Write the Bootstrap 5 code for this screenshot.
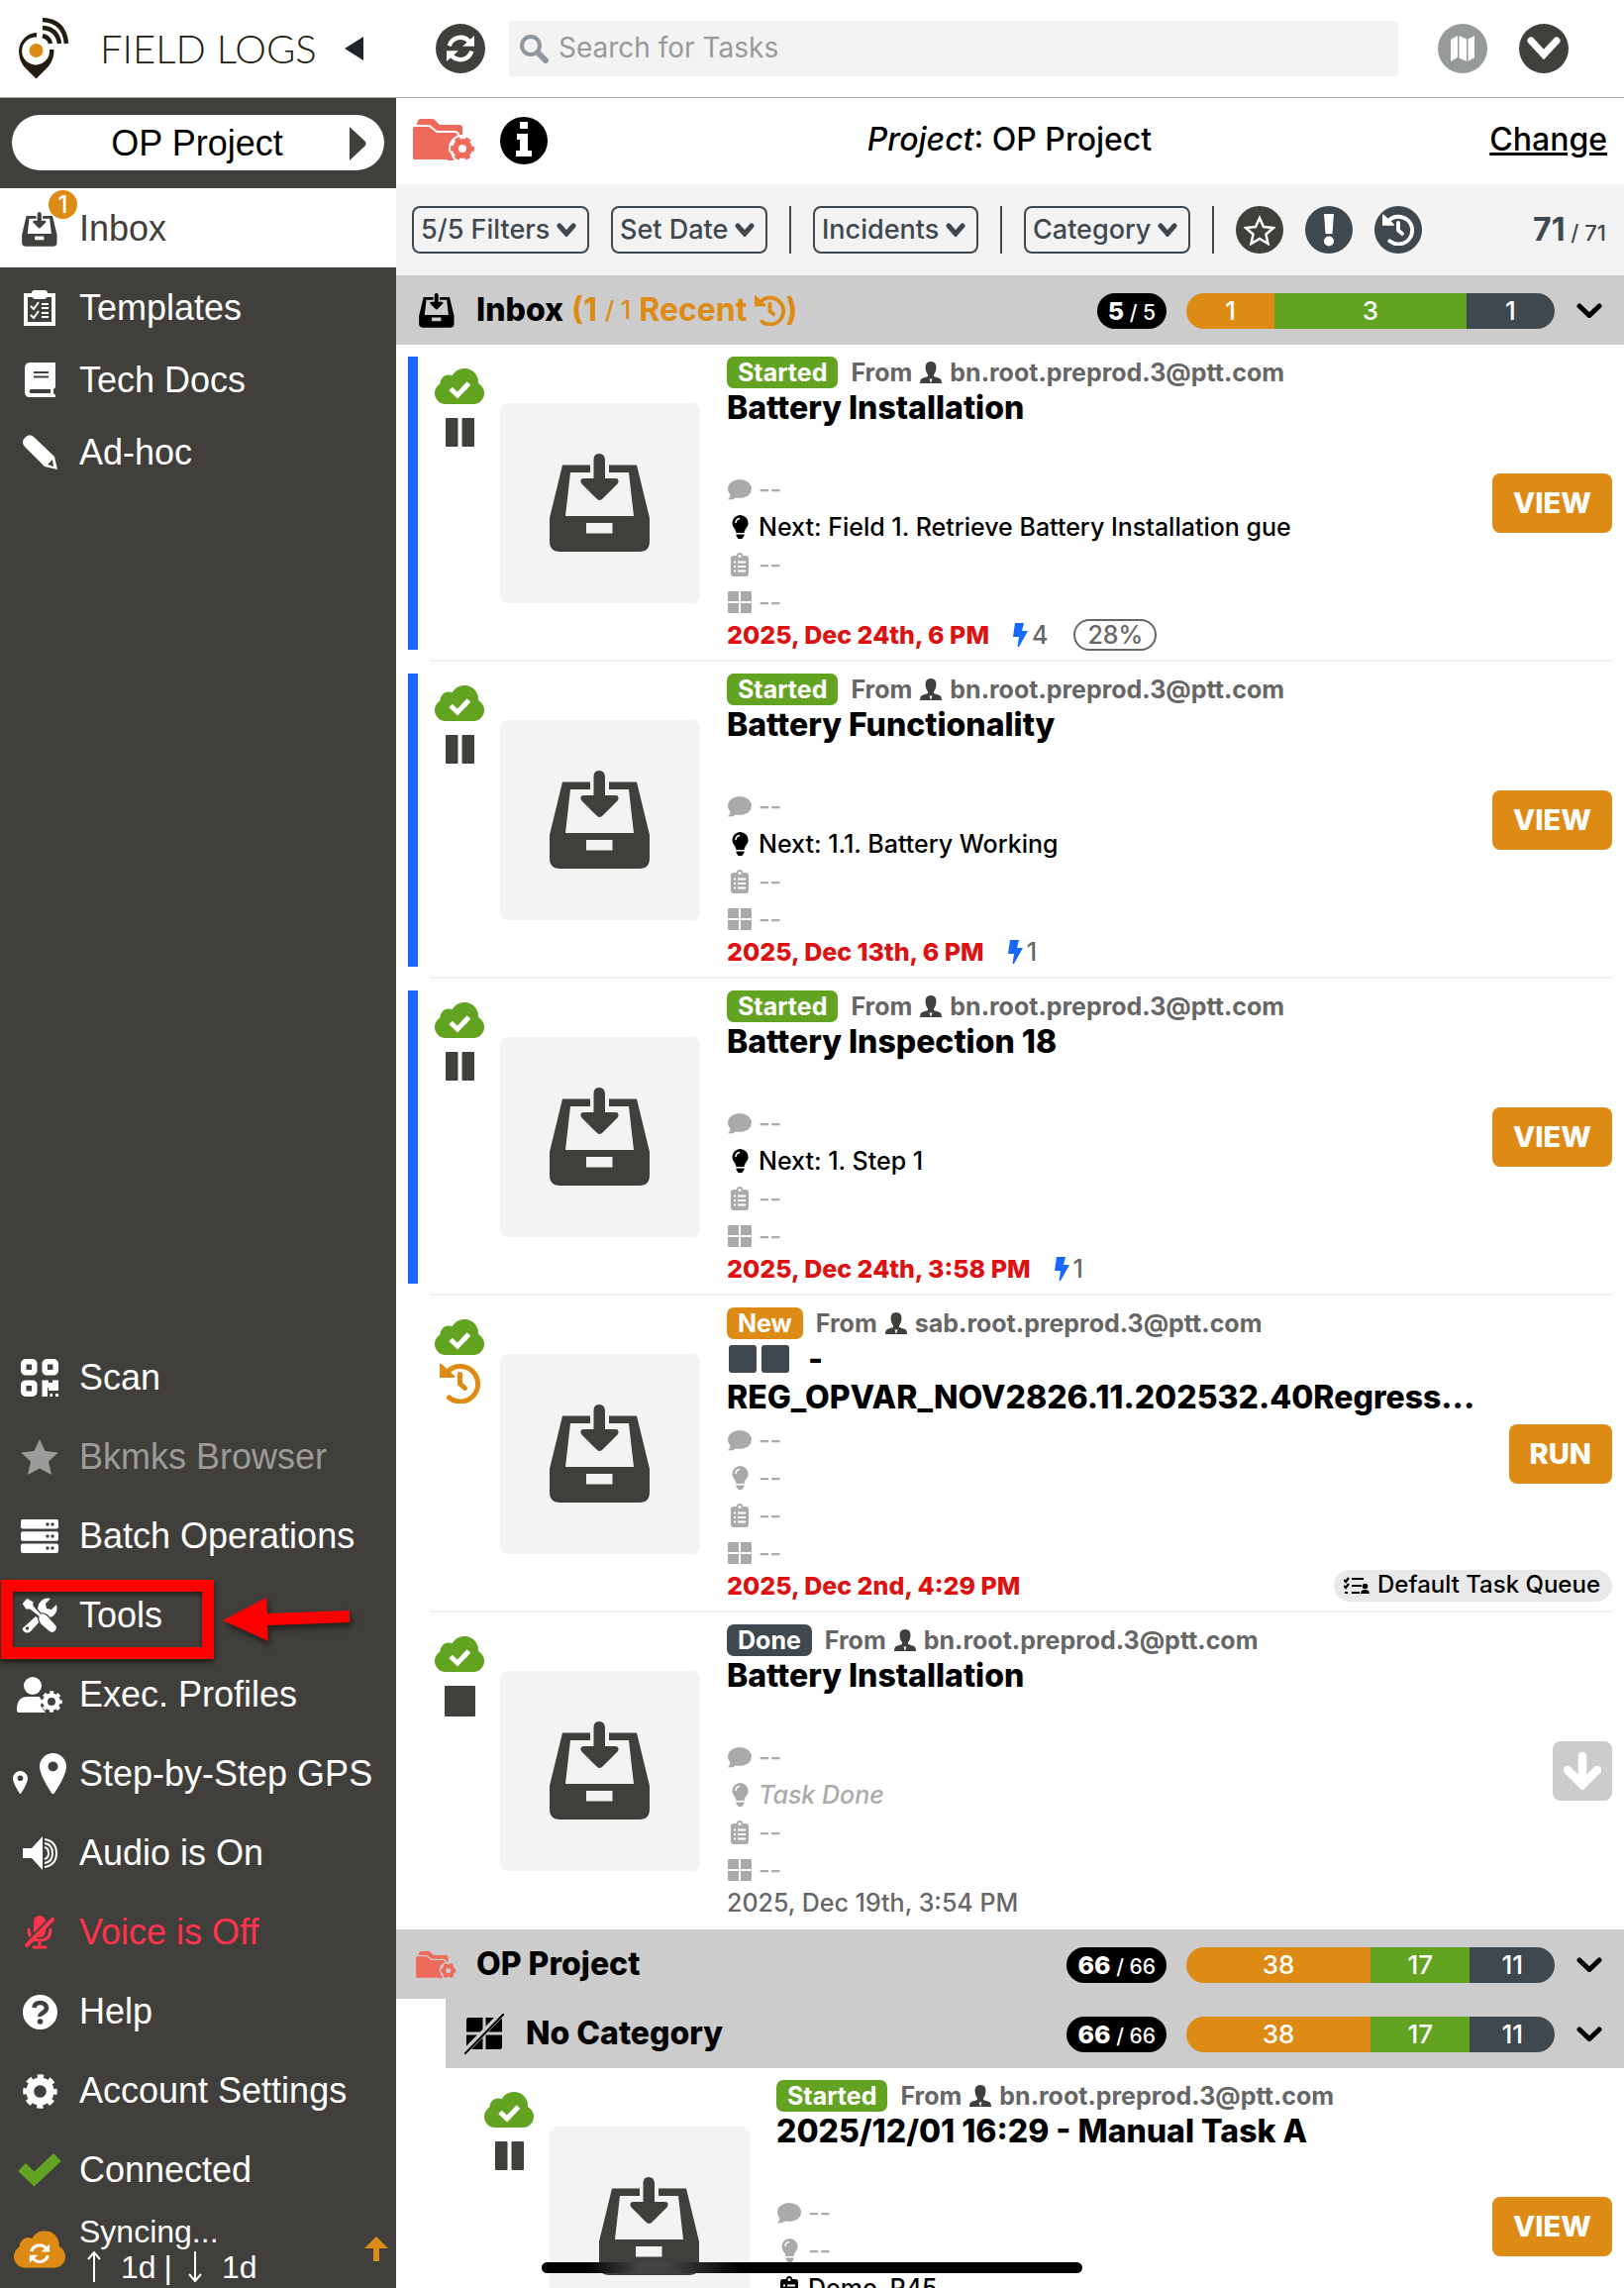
<!DOCTYPE html>
<html lang="en">
<head>
<meta charset="utf-8">
<meta name="viewport" content="width=device-width, initial-scale=1">
<title>Field Logs - Inbox</title>
<link href="https://cdn.jsdelivr.net/npm/bootstrap@5.3.0/dist/css/bootstrap.min.css" rel="stylesheet">
<style>
:root{--dark:#403f3b;--slate:#40484f;--orange:#dd8b14;--green:#62a322;--bar:#cccccc;--pale:#f3f3f3}
body{font-family:Inter,"Liberation Sans",sans-serif;font-optical-sizing:none;color:#000;background:#fff;line-height:1.2}
svg{display:block;flex:none;fill:currentColor}
button{font:inherit}
.top-bar{height:99px;border-bottom:1px solid #aaa}
.side{width:400px;flex:none}
.side,.side a,.side button{font-family:"Liberation Sans",Arial,sans-serif;font-size:36px}
.brand-zone{width:400px;padding-left:18px;color:#231c10}
.brand-name{font-family:Lato,sans-serif;font-weight:300;font-size:40px;line-height:48px;margin-left:31px;white-space:nowrap}
.side-panel{background:var(--dark);color:#fff}
.project-pick{height:56px;margin:17px 12px 18px;border:0;border-radius:28px;background:#fff;color:#000;padding:2px 18px 0 34px}
.side-link{display:flex;align-items:center;height:80px;color:#fff;text-decoration:none;position:relative;white-space:nowrap}
.side-top .side-link{height:73px}
.side-top .side-link.current{height:80px;margin-bottom:4px;padding-top:2px;background:#fff;color:var(--dark)}
.side-ico{width:80px;flex:none;display:flex;justify-content:center}
.count-dot{position:absolute;left:49px;top:2px;width:29px;height:29px;border-radius:50%;background:var(--orange);color:#fff;font:500 24px/29px Inter,sans-serif;text-align:center}
.faded{color:#9c9b99 !important}
.voice{color:#ff334b !important}
.sync-row{height:79px}
.sync-text{font-size:32px;line-height:36px}
.focus-box{position:absolute;left:1px;top:4px;width:215px;height:80px;border:12px solid #f00;box-shadow:0 3px 5px rgba(0,0,0,.6), inset 0 3px 4px rgba(0,0,0,.5);pointer-events:none}
.focus-arrow{position:absolute;left:224px;top:20px;color:#f00;filter:drop-shadow(2px 4px 3px rgba(0,0,0,.5))}
.round-btn{width:50px;height:50px;border:0;border-radius:50%;background:var(--dark);color:#fff;display:flex;align-items:center;justify-content:center;padding:0;flex:none}
.round-btn.ash{background:#969a9b}
.round-sm{width:48px;height:48px}
.slate{background:var(--slate)}
.search-box{height:56px;background:var(--pale);border-radius:3px;padding-left:11px}
.search-box input{border:0;background:none;font-size:28px;color:#333;outline:0;padding:0 0 0 10px;min-width:0}
.search-box input::placeholder{color:#999;opacity:1}
.project-row{height:87px;padding:0 17px 2px 16px;font-size:32px;font-weight:500}
.filters{height:92px;background:var(--pale);padding:0 18px 0 16px;color:var(--slate)}
.pick{width:auto;height:48px;border:2px solid var(--slate);border-radius:8px;color:var(--slate);font-size:27px;font-weight:500;line-height:32px;padding:0 37px 0 7px;background:var(--pale) url("data:image/svg+xml,%3Csvg xmlns='http://www.w3.org/2000/svg' viewBox='0 0 20 14'%3E%3Cpath d='M3 3l7 8 7-8' fill='none' stroke='%2340484f' stroke-width='5' stroke-linecap='round'/%3E%3C/svg%3E") no-repeat right 11px top 15px/20px 14px}
.split-line{width:2px;height:48px;background:var(--slate);margin:0 22px}
.gap-l{margin-left:22px}
.shown{font-size:32px;font-weight:700}
.shown small{font-size:22px;font-weight:500}
.group-bar{height:70px;background:var(--bar);padding:1px 22px 0 23px;font-size:32px;font-weight:800;--gap:#ccc}
.group-ico{width:58px;flex:none}
.group-ico.wide{margin-left:-4px;width:62px}
.warm{color:var(--orange);font-weight:700}
.light-num{font-weight:500;font-size:25px}
.total{height:36px;border-radius:18px;background:#000;color:#fff;padding:0 11px;font-size:25px;line-height:36px;white-space:nowrap}
.total small{font-size:21px;font-weight:500}
.meter{width:372px;height:36px;border-radius:18px;background:none;font-size:26px;font-weight:500;margin:0 22px 0 20px}
.meter .progress-bar{color:#fff}
.o{background:var(--orange)}.g{background:var(--green)}.s{background:var(--slate)}
.task{height:320px;padding:12px 12px 0;position:relative}
.task:not(:last-child)::after{content:"";position:absolute;left:34px;right:12px;bottom:0;height:2px;background:#f1f1f1}
.stripe{width:10px;height:296px;flex:none}
.stripe.on{background:#1668ff}
.status-col{width:50px;margin-left:17px;flex:none;padding-top:12px;gap:14px}
.status-col .bigger{margin-top:-6px}
.thumb{width:202px;height:202px;margin:47px 27px 0 16px;border-radius:8px;background:var(--pale);color:var(--dark);flex:none;display:flex;align-items:center;justify-content:center}
.info-grid{display:grid;grid-template-columns:minmax(0,1fr) auto;grid-template-rows:264px 32px;flex:1;min-width:0;height:296px;font-size:25px}
.act{grid-column:2;grid-row:1/3;align-self:center;z-index:1}
.when{grid-column:1/3;grid-row:2;padding-top:1px}
.tag{height:32px;line-height:33px;border-radius:7px;color:#fff;font-weight:700;padding:0 11px;margin-right:13px}
.from{color:#666;font-weight:700;white-space:nowrap}
.task-name{font-size:32px;line-height:39px;height:78px;font-weight:800;margin:0 0 5px}
.block-mark{display:inline-block;width:28px;height:28px;border-radius:3px;background:var(--slate);vertical-align:-3px;margin:0 5px 0 0}
.block-mark:first-child{margin-left:2px}
.fact{height:38px;color:#aaa;font-weight:500;white-space:nowrap}
.fact.live{color:#000}
.fact-ico{width:26px;display:flex;justify-content:center;margin-right:6px}
.late{color:#dd1111;font-weight:800}
.muted-txt{color:#666;font-weight:500}
.pct{height:32px;border:2px solid #666;border-radius:16px;line-height:28px;padding:0 12px;margin-left:26px}
.queue{height:32px;border-radius:16px;background:#e9e9e9;padding:0 12px 0 10px;font-size:24px;font-weight:500}
.go{background:var(--orange);border:0;border-radius:8px;color:#fff;font-size:29px;font-weight:800;height:60px;padding:1px 21px 0}
.go-off{background:#ccc;width:60px;padding:0 11px}
.nested{margin-left:50px}
.feed{overflow-y:auto;scrollbar-width:none}
.home-line{position:fixed;left:50%;bottom:15px;width:33.3%;height:11px;border-radius:6px;transform:translateX(-50%);background:linear-gradient(90deg,#000 8%,#444 18%,#444 23%,#000 37%);z-index:5}
</style>
<script src="https://cdn.jsdelivr.net/npm/bootstrap@5.3.0/dist/js/bootstrap.bundle.min.js"></script>
</head>
<body>
<svg width="0" height="0" class="position-absolute" aria-hidden="true">
<symbol id="i-inbox" viewBox="0 0 102 100"><path fill-rule="evenodd" d="M13 11.500H41V19H21L16 63H85L80 19H60V11.500H88L101 65V88Q101 99 91 99H10Q0 99 0 88V65ZM37 70V80.500H63.500V70Z"/><path d="M44.500 6Q44.500 0 50 0T56 6V25H66Q71 25 69 30L54 45Q50.500 49 47 45L32 30Q30 25 35 25H44.500Z"/></symbol>
<symbol id="i-cloud" viewBox="0 0 50 36"><circle cx="30" cy="14" r="14"/><circle cx="14" cy="15" r="8.500"/><circle cx="11" cy="25" r="11"/><circle cx="39" cy="25" r="11"/><path d="M11 14H39V36H11Z"/></symbol>
<symbol id="i-sync" viewBox="0 0 26 26"><path d="M2.500 10.500A11 11 0 0 1 21 6M23.500 15.500A11 11 0 0 1 5 20" fill="none" stroke="currentColor" stroke-width="4"/><path d="M26 1V11H15ZM0 25V15H11Z"/></symbol>
<symbol id="i-hist" viewBox="0 0 41 41"><path d="M7 10A17.800 17.800 0 1 1 9.500 35" fill="none" stroke="currentColor" stroke-width="5" stroke-linecap="round"/><path d="M0 1Q1 0 3 2L15 13Q16 15 14 15H0Z"/><path d="M20.500 11.500V21L25.500 25.500" fill="none" stroke="currentColor" stroke-width="5" stroke-linecap="round"/></symbol>
<symbol id="i-gear" viewBox="0 0 36 36"><circle cx="18" cy="18" r="10.500" fill="none" stroke="currentColor" stroke-width="8"/><circle cx="18" cy="18" r="15.500" fill="none" stroke="currentColor" stroke-width="4.500" stroke-dasharray="6.500 5.670" stroke-dashoffset="3.250"/></symbol>
<symbol id="i-folder" viewBox="0 0 63 43"><path d="M5 5Q6 0 9 0H20Q22 0 23 1L28 6H48Q51 6 51 9V25H5Z"/><path d="M0 10Q0 7 3 7H16Q18 7 19 8L25 13H43Q47 13 47 17V42H3Q0 42 0 39Z" stroke="var(--gap,#fff)" stroke-width="2"/><circle cx="51" cy="30" r="14" fill="var(--gap,#fff)"/><path d="M38 32L42 42H36Z"/><svg x="39" y="18" width="24" height="24" viewBox="0 0 36 36"><circle cx="18" cy="18" r="10.500" fill="none" stroke="currentColor" stroke-width="9"/><circle cx="18" cy="18" r="15.500" fill="none" stroke="currentColor" stroke-width="5" stroke-dasharray="8 8.230" stroke-dashoffset="4"/></svg></symbol>
<symbol id="i-pause" viewBox="0 0 29 29"><rect width="12.500" height="29" rx="1"/><rect x="16.500" width="12.500" height="29" rx="1"/></symbol>
<symbol id="i-person" viewBox="0 0 22 22"><path d="M11 0Q16.500 0 16.500 6Q16.500 10 14 13.500V15L20 17Q22 18 22 22H0Q0 18 2 17L8 15V13.500Q5.500 10 5.500 6Q5.500 0 11 0Z"/><path d="M9.500 17.500L11 22L12.500 17.500Z" fill="#fff"/></symbol>
<symbol id="i-chat" viewBox="0 0 24 21"><ellipse cx="12" cy="9.500" rx="12" ry="9.500"/><path d="M2 13Q3 18 0 20.500Q5 21 9 18Z"/></symbol>
<symbol id="i-bulb" viewBox="0 0 17 24"><path d="M8.500 0A8 8 0 0 1 16.500 8.500C16.500 12 13 14 12.500 18H4.500C4 14 .5 12 .5 8.500A8 8 0 0 1 8.500 0Z"/><path d="M4.500 19.500H12.500V21L10.500 24H6.500L4.500 21Z"/><path d="M4 8Q4 4 8 3.500" fill="none" stroke="#fff" stroke-width="1.500"/></symbol>
<symbol id="i-clip" viewBox="0 0 18 24"><path d="M3 3H6Q6 0 9 0T12 3H15Q18 3 18 6V21Q18 24 15 24H3Q0 24 0 21V6Q0 3 3 3Z"/><path d="M3 9.500H5M7 9.500H15M3 14H5M7 14H15M3 18.500H5M7 18.500H15" stroke="#fff" stroke-width="1.800"/><circle cx="9" cy="3.500" r="1.500" fill="#fff"/></symbol>
<symbol id="i-grid" viewBox="0 0 24 22"><path d="M1 0H11V10H0V1ZM13 0H23L24 1V10H13ZM0 12H11V22H1L0 21ZM13 12H24V21L23 22H13Z"/></symbol>
<symbol id="i-bolt" viewBox="0 0 15 24"><path d="M2 0H11L9 8H15L6 24H4.500L6 14H0Z"/></symbol>
<symbol id="i-down" viewBox="0 0 26 15"><path d="M3 3L13 12.500L23 3" fill="none" stroke="currentColor" stroke-width="5" stroke-linecap="round"/></symbol>
<symbol id="i-okcloud" viewBox="0 0 50 36"><use href="#i-cloud" width="50" height="36"/><path d="M16 20.500L23 27L34.500 15" fill="none" stroke="#fff" stroke-width="5"/></symbol>
</svg>

<div class="d-flex flex-column vh-100 overflow-hidden">
<header class="top-bar d-flex align-items-center flex-shrink-0">
  <div class="brand-zone d-flex align-items-center flex-shrink-0">
    <svg width="52" height="64" viewBox="0 0 52 64"><path fill-rule="evenodd" d="M19 16V20.500A14 14 0 1 0 32 33H36.500Q37 42 31 50L18.500 62.500L6 50Q1 43 1 34A19 19 0 0 1 19 16Z"/><path d="M7 47Q18.500 53 30 47L18.500 62Z"/><circle cx="18.500" cy="34" r="7" fill="#dd8b14"/><g fill="none" stroke="currentColor" stroke-width="4.500"><path d="M25 19Q32 21 33 27M25 11Q40 12 42 27M25 3Q47 4 49 27"/></g></svg>
    <span class="brand-name">FIELD LOGS</span>
    <button class="btn p-0 border-0 ms-auto me-4" aria-label="Collapse menu"><svg width="20" height="24" viewBox="0 0 20 24" class="me-2"><path d="M19 0V24L0 12Z"/></svg></button>
  </div>
  <div class="d-flex align-items-center flex-grow-1 ps-4">
    <button class="round-btn ms-3" aria-label="Refresh"><svg width="28" height="28"><use href="#i-sync"/></svg></button>
    <label class="search-box d-flex align-items-center flex-grow-1 ms-4" aria-label="Search tasks">
      <svg width="29" height="29" viewBox="0 0 29 29"><circle cx="11" cy="11" r="9" fill="none" stroke="#9096a0" stroke-width="4"/><path d="M18 18L26 26" stroke="#9096a0" stroke-width="6" stroke-linecap="round"/></svg>
      <input class="flex-grow-1" type="search" placeholder="Search for Tasks">
    </label>
    <div class="d-flex gap-4 ps-3 pe-5 ms-4"><button class="round-btn ash" aria-label="Map"><svg width="26" height="26" viewBox="0 0 26 26"><path d="M1 4L8 0V22L1 26ZM9.500 0L17 3.500V26L9.500 22.500ZM18.500 3.500L25 0V22L18.500 26Z"/></svg></button>
    <button class="round-btn ms-2 me-2" aria-label="More"><svg width="34" height="24" viewBox="0 0 34 24"><path d="M4 4L17 18L30 4" fill="none" stroke="#fff" stroke-width="7" stroke-linecap="round"/></svg></button></div>
  </div>
</header>

<div class="d-flex flex-grow-1 overflow-hidden">
<nav class="side side-panel d-flex flex-column">
  <button class="project-pick d-flex align-items-center"><span class="flex-grow-1 text-center">OP Project</span><svg width="18" height="34" viewBox="0 0 18 34" color="#403f3b"><path d="M1 0L17 15Q18 17 17 19L1 34Z"/></svg></button>
  <div class="side-top">
    <a class="side-link current" href="#"><span class="side-ico"><svg width="36" height="35"><use href="#i-inbox"/></svg></span>Inbox<span class="count-dot">1</span></a>
    <a class="side-link" href="#"><span class="side-ico"><svg width="32" height="36" viewBox="0 0 32 36"><path fill-rule="evenodd" d="M0 3H8Q8 0 11 0H21Q24 0 24 3H32V36H0ZM4 7V32H28V7H24L21 9H11L8 7Z"/><path d="M7 16L10 19L15 12M7 25L10 28L15 21M18 14H25M18 18H25M18 23H25M18 27H25" stroke="#fff" stroke-width="2" fill="none"/></svg></span>Templates</a>
    <a class="side-link" href="#"><span class="side-ico"><svg width="31" height="35" viewBox="0 0 31 35"><path fill-rule="evenodd" d="M5 0H31V25L29 27V31L31 33V35H5Q0 35 0 30V6Q0 0 5 0ZM9 9V11H24V9ZM9 13.500V15.500H24V13.500ZM6 27Q3 29 6 31H26V27Z"/></svg></span>Tech Docs</a>
    <a class="side-link" href="#"><span class="side-ico"><svg width="35" height="35" viewBox="0 0 35 35"><path fill-rule="evenodd" d="M2 3Q6 -2 11 2L32 22L35 35L22 32L2 12Q-2 7 2 3ZM30 25L25 30L31 32Z"/></svg></span>Ad-hoc</a>
  </div>
  <div class="mt-auto">
    <a class="side-link" href="#"><span class="side-ico"><svg width="38" height="38" viewBox="0 0 38 38"><g fill="none" stroke="currentColor" stroke-width="5.500"><rect x="2.800" y="2.800" width="11" height="11" rx="2"/><rect x="24.200" y="2.800" width="11" height="11" rx="2"/><rect x="2.800" y="24.200" width="11" height="11" rx="2"/></g><path d="M21.500 21.500H28V24H32V21.500H38V32H28V29H27V38H21.500ZM29.500 35H32V38H29.500ZM35 35H38V38H35Z"/></svg></span>Scan</a>
    <a class="side-link faded" href="#"><span class="side-ico"><svg width="38" height="36" viewBox="0 0 38 36"><path d="M19 0L24.500 12L38 13.500L28 22.500L31 36L19 29.500L7 36L10 22.500L0 13.500L13.500 12Z"/></svg></span>Bkmks Browser</a>
    <a class="side-link" href="#"><span class="side-ico"><svg width="38" height="34" viewBox="0 0 38 34"><rect width="38" height="9.500" rx="2"/><rect y="12.200" width="38" height="9.500" rx="2"/><rect y="24.400" width="38" height="9.500" rx="2"/><g fill="#403f3b"><circle cx="27" cy="5" r="1.700"/><circle cx="32" cy="5" r="1.700"/><circle cx="27" cy="17" r="1.700"/><circle cx="32" cy="17" r="1.700"/><circle cx="27" cy="29" r="1.700"/><circle cx="32" cy="29" r="1.700"/></g></svg></span>Batch Operations</a>
    <a class="side-link" href="#"><span class="side-ico"><svg width="36" height="36" viewBox="0 0 36 36"><path d="M3 29L14 19L19 23L9 34Q5 37 2 34T3 29Z"/><path d="M16 13Q16 4 23 1Q27 0 29 1L24 6L25 11L30 12L35 7Q37 15 31 19Q27 21 22 19Z"/><path d="M0 6L5 0L12 4V8L19 16Q23 15 26 18L34 27Q37 30 34 34Q31 37 27 34L19 27Q16 24 17 19L8 12H4Z" stroke="#403f3b" stroke-width="1.200"/><circle cx="5.500" cy="31" r="1.700" fill="#403f3b"/></svg></span>Tools<span class="focus-box"></span><svg class="focus-arrow" width="132" height="48" viewBox="0 0 132 48"><path d="M1 25L45 2L46 18L129 15V27L46 30L47 46Z"/></svg></a>
    <a class="side-link" href="#"><span class="side-ico"><svg width="46" height="36" viewBox="0 0 46 36"><circle cx="16" cy="9" r="9"/><path d="M0 33Q0 20 11 20H23Q26 26 24 29L29 36H2Q0 36 0 33Z"/><svg x="24" y="14" width="22" height="22" viewBox="0 0 36 36"><use href="#i-gear" width="36" height="36"/></svg></svg></span>Exec. Profiles</a>
    <a class="side-link" href="#"><span class="side-ico"><svg width="54" height="42" viewBox="0 0 54 42"><path fill-rule="evenodd" d="M40.500 0A13.500 13.500 0 0 1 54 13.500Q54 22 41.500 41H39.500Q27 22 27 13.500A13.500 13.500 0 0 1 40.500 0ZM40.500 8.500A5 5 0 1 0 40.500 18.500A5 5 0 1 0 40.500 8.500ZM7.500 18A7.500 7.500 0 0 1 15 25.500Q15 30 8 41H7Q0 30 0 25.500A7.500 7.500 0 0 1 7.500 18ZM7.500 22.500A2.800 2.800 0 1 0 7.500 28.100A2.800 2.800 0 1 0 7.500 22.500Z"/></svg></span>Step-by-Step GPS</a>
    <a class="side-link" href="#"><span class="side-ico"><svg width="35" height="34" viewBox="0 0 35 34"><path d="M0 12H9L20 0V34L9 22H0Z"/><path d="M22 11Q26 12 26 17T22 23M22 7Q30 8 30 17T22 27M22 3Q34 5 34 17T22 31" fill="none" stroke="currentColor" stroke-width="2"/></svg></span>Audio is On</a>
    <a class="side-link voice" href="#"><span class="side-ico"><svg width="30" height="34" viewBox="0 0 30 34"><rect x="9" y="0" width="12" height="22" rx="6"/><path d="M4 14Q4 25 15 25T26 14M15 25V32M9 32H21" fill="none" stroke="currentColor" stroke-width="3" stroke-linecap="round"/><path d="M1 27L26 2" stroke="#403f3b" stroke-width="2"/><path d="M2 30L28 4" stroke="currentColor" stroke-width="4" stroke-linecap="round"/></svg></span>Voice is Off</a>
    <a class="side-link" href="#"><span class="side-ico"><svg width="35" height="35" viewBox="0 0 35 35"><circle cx="17.500" cy="17.500" r="17.500"/><path d="M11.500 13Q12 8 17.500 8T24 13Q24 16 20.500 18T17.500 22" fill="none" stroke="#403f3b" stroke-width="4.500"/><circle cx="17.500" cy="27" r="2.800" fill="#403f3b"/></svg></span>Help</a>
    <a class="side-link" href="#"><span class="side-ico"><svg width="35" height="35"><use href="#i-gear"/></svg></span>Account Settings</a>
    <a class="side-link" href="#"><span class="side-ico"><svg width="46" height="36" viewBox="0 0 46 36"><path d="M5 15L17.500 27L41 5" fill="none" stroke="#62a322" stroke-width="11" stroke-linejoin="miter"/></svg></span>Connected</a>
    <div class="sync-row d-flex align-items-center"><span class="side-ico"><svg width="52" height="38" viewBox="0 0 50 36" color="#dd8b14"><use href="#i-cloud" width="50" height="36"/><svg x="15" y="12" width="20" height="20" viewBox="0 0 26 26" color="#fff"><use href="#i-sync" width="26" height="26"/></svg></svg></span>
      <div class="sync-text flex-grow-1">Syncing...<div class="d-flex align-items-center"><svg width="14" height="31" viewBox="0 0 14 31" class="ms-2 me-3"><path d="M7 31V1M1 8L7 1L13 8" fill="none" stroke="#fff" stroke-width="2"/></svg><span class="ps-1 pe-2">1d</span>|<svg width="14" height="31" viewBox="0 0 14 31" class="ms-3 me-3"><path d="M7 0V30M1 23L7 30L13 23" fill="none" stroke="#fff" stroke-width="2"/></svg><span class="ps-1">1d</span></div></div>
      <svg width="24" height="25" viewBox="0 0 24 25" color="#dd8b14" class="me-2"><path d="M12 0L24 12H15V25H9V12H0Z"/></svg></div>
  </div>
</nav>

<main class="flex-grow-1 d-flex flex-column overflow-hidden">
  <div class="project-row d-flex align-items-center flex-shrink-0">
    <div class="d-flex align-items-center col"><svg width="63" height="43" color="#ee6a5b"><use href="#i-folder"/></svg>
    <svg width="50" height="48" viewBox="0 0 50 48" class="ms-4"><circle cx="26" cy="24" r="24"/><path d="M22 5H30V12H22ZM19 17H30V34H34V40H18V34H22V23H19Z" fill="#fff"/></svg></div>
    <div class="col-auto"><em>Project</em>: OP Project</div>
    <div class="col text-end"><a href="#" class="text-black">Change</a></div>
  </div>
  <div class="filters d-flex align-items-center flex-shrink-0">
    <select class="form-select pick" aria-label="Filters"><option>5/5 Filters</option></select>
    <select class="form-select pick gap-l" aria-label="Date"><option>Set Date</option></select>
    <span class="split-line"></span>
    <select class="form-select pick" aria-label="Incidents"><option>Incidents</option></select>
    <span class="split-line"></span>
    <select class="form-select pick" aria-label="Category"><option>Category</option></select>
    <span class="split-line"></span>
    <button class="round-btn round-sm" aria-label="Starred"><svg width="32" height="31" viewBox="0 0 32 31"><path d="M16 3L20 12L30 13L22.500 19.500L24.500 29L16 24L7.500 29L9.500 19.500L2 13L12 12Z" fill="none" stroke="#fff" stroke-width="2.500"/></svg></button>
    <button class="round-btn round-sm slate gap-l" aria-label="Important"><svg width="12" height="33" viewBox="0 0 12 33"><path d="M1 0H11L9.500 20H2.500Z"/><circle cx="6" cy="27.500" r="5"/></svg></button>
    <button class="round-btn round-sm slate gap-l" aria-label="Recent"><svg width="32" height="32"><use href="#i-hist"/></svg></button>
    <div class="shown ms-auto">71<small> / 71</small></div>
  </div>

  <div class="feed flex-grow-1">
  <section>
    <div class="group-bar d-flex align-items-center">
      <span class="group-ico"><svg width="36" height="35"><use href="#i-inbox"/></svg></span>Inbox
      <span class="warm ms-2 d-flex align-items-center">(1<span class="light-num mx-2">/ 1</span>Recent<svg width="31" height="31" class="ms-2"><use href="#i-hist"/></svg>)</span>
      <span class="total ms-auto">5<small> / 5</small></span>
      <div class="progress meter"><div class="progress-bar o" style="width:24%">1</div><div class="progress-bar g" style="width:52%">3</div><div class="progress-bar s" style="width:24%">1</div></div>
      <svg width="26" height="15"><use href="#i-down"/></svg>
    </div>

    <article class="task d-flex"><span class="stripe on"></span>
      <div class="status-col d-flex flex-column align-items-center"><svg width="50" height="36" color="#62a322"><use href="#i-okcloud"/></svg><svg width="29" height="29" color="#403f3b"><use href="#i-pause"/></svg></div>
      <div class="thumb"><svg width="102" height="100"><use href="#i-inbox"/></svg></div>
      <div class="info-grid"><div>
        <div class="d-flex align-items-center from"><span class="tag g">Started</span>From<svg width="22" height="22" color="#403f3b" class="mx-2"><use href="#i-person"/></svg>bn.root.preprod.3@ptt.com</div>
        <h2 class="task-name">Battery Installation</h2>
        <div class="fact d-flex align-items-center"><span class="fact-ico"><svg width="24" height="21"><use href="#i-chat"/></svg></span>--</div>
        <div class="fact live d-flex align-items-center"><span class="fact-ico"><svg width="17" height="24"><use href="#i-bulb"/></svg></span>Next: Field 1. Retrieve Battery Installation gue</div>
        <div class="fact d-flex align-items-center"><span class="fact-ico"><svg width="18" height="24"><use href="#i-clip"/></svg></span>--</div>
        <div class="fact d-flex align-items-center"><span class="fact-ico"><svg width="24" height="22"><use href="#i-grid"/></svg></span>--</div></div>
        <button class="go act">VIEW</button>
        <div class="when d-flex align-items-center muted-txt"><span class="late me-4">2025, Dec 24th, 6 PM</span><svg width="15" height="24" color="#1668ff" class="me-1"><use href="#i-bolt"/></svg>4<span class="pct">28%</span></div>
      </div>
    </article>
    <article class="task d-flex"><span class="stripe on"></span>
      <div class="status-col d-flex flex-column align-items-center"><svg width="50" height="36" color="#62a322"><use href="#i-okcloud"/></svg><svg width="29" height="29" color="#403f3b"><use href="#i-pause"/></svg></div>
      <div class="thumb"><svg width="102" height="100"><use href="#i-inbox"/></svg></div>
      <div class="info-grid"><div>
        <div class="d-flex align-items-center from"><span class="tag g">Started</span>From<svg width="22" height="22" color="#403f3b" class="mx-2"><use href="#i-person"/></svg>bn.root.preprod.3@ptt.com</div>
        <h2 class="task-name">Battery Functionality</h2>
        <div class="fact d-flex align-items-center"><span class="fact-ico"><svg width="24" height="21"><use href="#i-chat"/></svg></span>--</div>
        <div class="fact live d-flex align-items-center"><span class="fact-ico"><svg width="17" height="24"><use href="#i-bulb"/></svg></span>Next: 1.1. Battery Working</div>
        <div class="fact d-flex align-items-center"><span class="fact-ico"><svg width="18" height="24"><use href="#i-clip"/></svg></span>--</div>
        <div class="fact d-flex align-items-center"><span class="fact-ico"><svg width="24" height="22"><use href="#i-grid"/></svg></span>--</div></div>
        <button class="go act">VIEW</button>
        <div class="when d-flex align-items-center muted-txt"><span class="late me-4">2025, Dec 13th, 6 PM</span><svg width="15" height="24" color="#1668ff" class="me-1"><use href="#i-bolt"/></svg>1</div>
      </div>
    </article>
    <article class="task d-flex"><span class="stripe on"></span>
      <div class="status-col d-flex flex-column align-items-center"><svg width="50" height="36" color="#62a322"><use href="#i-okcloud"/></svg><svg width="29" height="29" color="#403f3b"><use href="#i-pause"/></svg></div>
      <div class="thumb"><svg width="102" height="100"><use href="#i-inbox"/></svg></div>
      <div class="info-grid"><div>
        <div class="d-flex align-items-center from"><span class="tag g">Started</span>From<svg width="22" height="22" color="#403f3b" class="mx-2"><use href="#i-person"/></svg>bn.root.preprod.3@ptt.com</div>
        <h2 class="task-name">Battery Inspection 18</h2>
        <div class="fact d-flex align-items-center"><span class="fact-ico"><svg width="24" height="21"><use href="#i-chat"/></svg></span>--</div>
        <div class="fact live d-flex align-items-center"><span class="fact-ico"><svg width="17" height="24"><use href="#i-bulb"/></svg></span>Next: 1. Step 1</div>
        <div class="fact d-flex align-items-center"><span class="fact-ico"><svg width="18" height="24"><use href="#i-clip"/></svg></span>--</div>
        <div class="fact d-flex align-items-center"><span class="fact-ico"><svg width="24" height="22"><use href="#i-grid"/></svg></span>--</div></div>
        <button class="go act">VIEW</button>
        <div class="when d-flex align-items-center muted-txt"><span class="late me-4">2025, Dec 24th, 3:58 PM</span><svg width="15" height="24" color="#1668ff" class="me-1"><use href="#i-bolt"/></svg>1</div>
      </div>
    </article>
    <article class="task d-flex"><span class="stripe"></span>
      <div class="status-col d-flex flex-column align-items-center"><svg width="50" height="36" color="#62a322"><use href="#i-okcloud"/></svg><svg width="41" height="41" color="#dd8b14" class="bigger"><use href="#i-hist"/></svg></div>
      <div class="thumb"><svg width="102" height="100"><use href="#i-inbox"/></svg></div>
      <div class="info-grid"><div>
        <div class="d-flex align-items-center from"><span class="tag o">New</span>From<svg width="22" height="22" color="#403f3b" class="mx-2"><use href="#i-person"/></svg>sab.root.preprod.3@ptt.com</div>
        <h2 class="task-name text-nowrap"><span class="block-mark"></span><span class="block-mark"></span>&nbsp; -<br>REG_OPVAR_NOV2826.11.202532.40Regress...</h2>
        <div class="fact d-flex align-items-center"><span class="fact-ico"><svg width="24" height="21"><use href="#i-chat"/></svg></span>--</div>
        <div class="fact d-flex align-items-center"><span class="fact-ico"><svg width="17" height="24"><use href="#i-bulb"/></svg></span>--</div>
        <div class="fact d-flex align-items-center"><span class="fact-ico"><svg width="18" height="24"><use href="#i-clip"/></svg></span>--</div>
        <div class="fact d-flex align-items-center"><span class="fact-ico"><svg width="24" height="22"><use href="#i-grid"/></svg></span>--</div></div>
        <button class="go act">RUN</button>
        <div class="when d-flex align-items-center"><span class="late">2025, Dec 2nd, 4:29 PM</span><span class="queue ms-auto d-flex align-items-center"><svg width="26" height="18" viewBox="0 0 26 18" class="me-2"><path d="M0 3L2 5L5 1M0 9L2 11L5 7M1 16H4M8 2H20M8 9H18M8 16H16" fill="none" stroke="#000" stroke-width="2.200"/><circle cx="21.500" cy="9.500" r="2.800"/><path d="M17 17Q17 13 21.500 13T26 17Z"/></svg>Default Task Queue</span></div>
      </div>
    </article>
    <article class="task d-flex"><span class="stripe"></span>
      <div class="status-col d-flex flex-column align-items-center"><svg width="50" height="36" color="#62a322"><use href="#i-okcloud"/></svg><svg width="31" height="31" viewBox="0 0 31 31" color="#403f3b"><rect width="31" height="31" rx="1"/></svg></div>
      <div class="thumb"><svg width="102" height="100"><use href="#i-inbox"/></svg></div>
      <div class="info-grid"><div>
        <div class="d-flex align-items-center from"><span class="tag s">Done</span>From<svg width="22" height="22" color="#403f3b" class="mx-2"><use href="#i-person"/></svg>bn.root.preprod.3@ptt.com</div>
        <h2 class="task-name">Battery Installation</h2>
        <div class="fact d-flex align-items-center"><span class="fact-ico"><svg width="24" height="21"><use href="#i-chat"/></svg></span>--</div>
        <div class="fact d-flex align-items-center"><span class="fact-ico"><svg width="17" height="24"><use href="#i-bulb"/></svg></span><em>Task Done</em></div>
        <div class="fact d-flex align-items-center"><span class="fact-ico"><svg width="18" height="24"><use href="#i-clip"/></svg></span>--</div>
        <div class="fact d-flex align-items-center"><span class="fact-ico"><svg width="24" height="22"><use href="#i-grid"/></svg></span>--</div></div>
        <button class="go go-off act" aria-label="Download"><svg width="38" height="38" viewBox="0 0 38 38"><path d="M19 4V30M4 18L19 33L34 18" fill="none" stroke="#fff" stroke-width="8.500" stroke-linecap="round"/></svg></button>
        <div class="when d-flex align-items-center muted-txt">2025, Dec 19th, 3:54 PM</div>
      </div>
    </article>
  </section>

  <section>
    <div class="group-bar d-flex align-items-center">
      <span class="group-ico wide"><svg width="42" height="28" color="#ee6a5b"><use href="#i-folder"/></svg></span>OP Project
      <span class="total ms-auto">66<small> / 66</small></span>
      <div class="progress meter"><div class="progress-bar o" style="width:50%">38</div><div class="progress-bar g" style="width:27%">17</div><div class="progress-bar s" style="width:23%">11</div></div>
      <svg width="26" height="15"><use href="#i-down"/></svg>
    </div>
    <div class="nested">
    <div class="group-bar d-flex align-items-center">
      <span class="group-ico wide"><svg width="40" height="41" viewBox="0 0 40 41"><svg x="2" y="4" width="36" height="32" viewBox="0 0 24 22" preserveAspectRatio="none"><use href="#i-grid" width="24" height="22"/></svg><path d="M-1 40L39 -1" stroke="#ccc" stroke-width="6"/><path d="M0 41L40 0" stroke="#000" stroke-width="2"/></svg></span>No Category
      <span class="total ms-auto">66<small> / 66</small></span>
      <div class="progress meter"><div class="progress-bar o" style="width:50%">38</div><div class="progress-bar g" style="width:27%">17</div><div class="progress-bar s" style="width:23%">11</div></div>
      <svg width="26" height="15"><use href="#i-down"/></svg>
    </div>
    <article class="task d-flex"><span class="stripe"></span>
      <div class="status-col d-flex flex-column align-items-center"><svg width="50" height="36" color="#62a322"><use href="#i-okcloud"/></svg><svg width="29" height="29" color="#403f3b"><use href="#i-pause"/></svg></div>
      <div class="thumb"><svg width="102" height="100"><use href="#i-inbox"/></svg></div>
      <div class="info-grid"><div>
        <div class="d-flex align-items-center from"><span class="tag g">Started</span>From<svg width="22" height="22" color="#403f3b" class="mx-2"><use href="#i-person"/></svg>bn.root.preprod.3@ptt.com</div>
        <h2 class="task-name">2025/12/01 16:29 - Manual Task A</h2>
        <div class="fact d-flex align-items-center"><span class="fact-ico"><svg width="24" height="21"><use href="#i-chat"/></svg></span>--</div>
        <div class="fact d-flex align-items-center"><span class="fact-ico"><svg width="17" height="24"><use href="#i-bulb"/></svg></span>--</div>
        <div class="fact live d-flex align-items-center"><span class="fact-ico"><svg width="18" height="24"><use href="#i-clip"/></svg></span>Demo_R45</div></div>
        <button class="go act">VIEW</button>
      </div>
    </article>
    </div>
  </section>
  </div>
</main>
</div>
</div>
<div class="home-line"></div>
</body>
</html>
